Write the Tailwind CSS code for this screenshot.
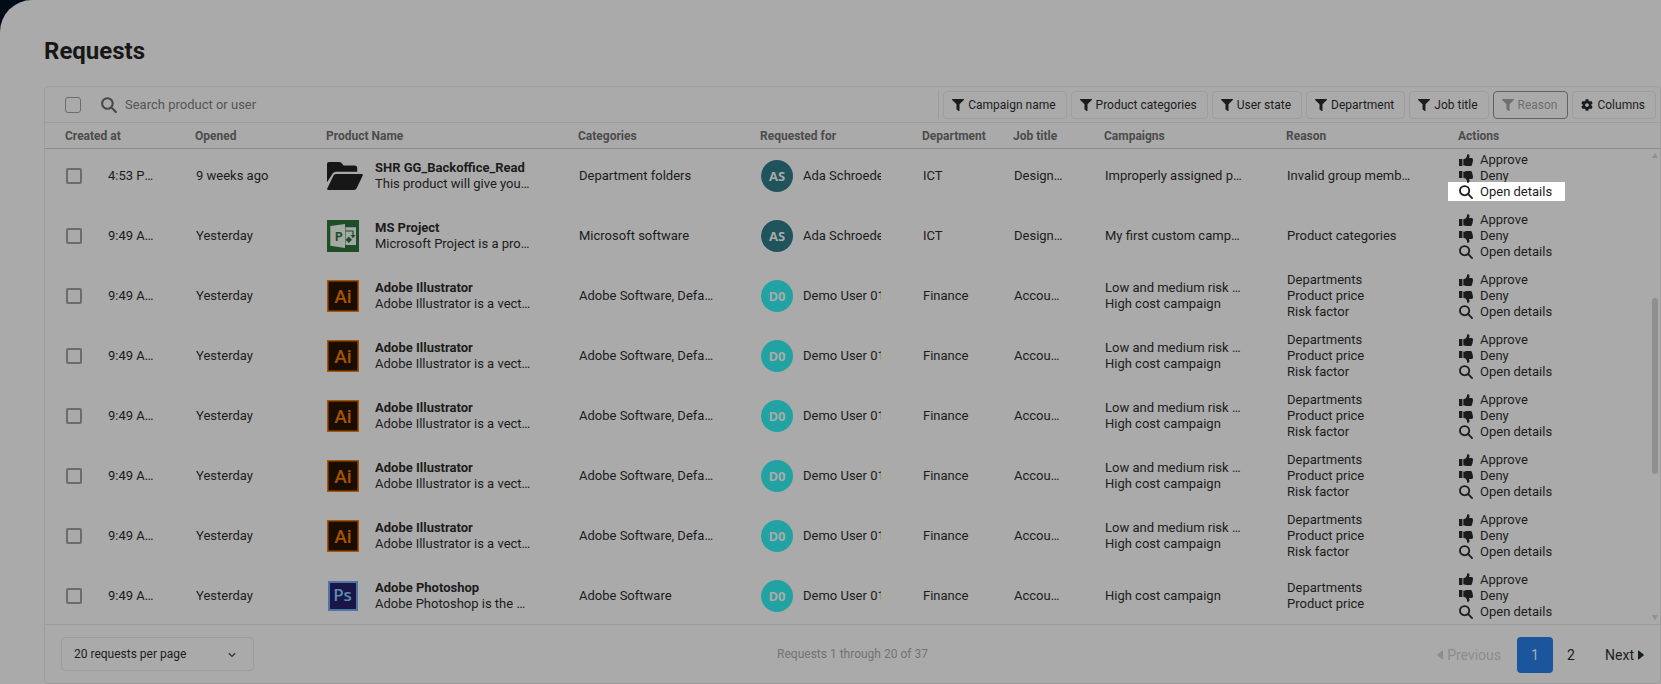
<!DOCTYPE html>
<html lang="en">
<head>
  <meta charset="UTF-8">
  <meta name="viewport" content="width=device-width, initial-scale=1.0">
  <title>Requests</title>
  <script src="https://cdn.jsdelivr.net/npm/@tailwindcss/browser@4"></script>
</head>
<body class="bg-[#000c18] font-['Roboto',sans-serif] text-[13px] leading-4 text-[#1c1c1c]">

  <!-- Icons -->
  <svg class="hidden">
    <symbol id="i-filter" viewBox="0 0 512 512"><path d="M487.976 0H24.028C2.71 0-8.047 25.866 7.058 40.971L192 225.941V432c0 7.831 3.821 15.17 10.237 19.662l80 55.98C298.02 518.69 320 507.493 320 487.98V225.941l184.947-184.97C520.021 25.896 509.338 0 487.976 0z"/></symbol>
    <symbol id="i-cog" viewBox="0 0 512 512"><path d="M487.4 315.7l-42.6-24.6c4.3-23.2 4.3-47 0-70.2l42.6-24.6c4.9-2.8 7.1-8.6 5.5-14-11.1-35.6-30-67.8-54.7-94.6-3.8-4.1-10-5.1-14.8-2.3L380.8 110c-17.9-15.4-38.5-27.3-60.8-35.1V25.8c0-5.6-3.9-10.5-9.4-11.7-36.7-8.2-74.3-7.8-109.2 0-5.5 1.2-9.4 6.1-9.4 11.7V75c-22.2 7.9-42.8 19.8-60.8 35.1L88.7 85.5c-4.9-2.8-11-1.9-14.8 2.3-24.7 26.7-43.6 58.9-54.7 94.6-1.7 5.4.6 11.2 5.5 14L67.3 221c-4.3 23.2-4.3 47 0 70.2l-42.6 24.6c-4.9 2.8-7.1 8.6-5.5 14 11.1 35.6 30 67.8 54.7 94.6 3.8 4.1 10 5.1 14.8 2.3l42.6-24.6c17.9 15.4 38.5 27.3 60.8 35.1v49.2c0 5.6 3.9 10.5 9.4 11.7 36.7 8.2 74.3 7.8 109.2 0 5.5-1.2 9.4-6.1 9.4-11.7v-49.2c22.2-7.9 42.8-19.8 60.8-35.1l42.6 24.6c4.9 2.8 11 1.9 14.8-2.3 24.7-26.7 43.6-58.9 54.7-94.6 1.5-5.5-.7-11.3-5.6-14.1zM256 336c-44.1 0-80-35.9-80-80s35.9-80 80-80 80 35.9 80 80-35.9 80-80 80z"/></symbol>
    <symbol id="i-thumb" viewBox="0 0 14 13"><path d="M0 5h3.4v7H0zM4.3 5.2 6.6 4.4 8 2.2V.7C8.3.1 9 0 9.5.3c1 .5 1.2 1.5.9 2.5L10 4h3c.8.2 1.1 1 .8 1.7.3.5.3 1.1-.1 1.6.2.6.1 1.1-.3 1.5.1.7-.1 1.2-.5 1.6 0 1-.6 1.7-1.6 1.7H8.5c-1.5 0-2.7-.6-4.2-.9z"/></symbol>
    <symbol id="i-search" viewBox="0 0 16 16"><path fill="none" stroke="currentColor" stroke-width="2.1" stroke-linecap="round" d="M11.7 6.5a5.3 5.3 0 1 1-10.6 0 5.3 5.3 0 0 1 10.6 0zM10.5 10.4l4.4 4.5"/></symbol>
    <symbol id="i-folder" viewBox="0 0 36 28"><path d="M0 20.3V2Q0 0 2 0H12.500Q14 0 15 1.500L16.500 3.500H28Q30.200 3.500 30.200 6V9.700H9Q6.800 9.700 5.700 11.500zM8.800 12H35Q36.300 12 35.700 13.400L29.800 26Q28.900 28 27 28H1.200Q-.4 28 .4 26.300L6.500 13.500Q7.200 12 8.800 12z"/></symbol>
  </svg>

  <main class="min-h-screen rounded-tl-[32px] bg-[#aaaaaa] pt-9 pl-11">
    <h1 class="mb-5 text-2xl leading-[30px] font-bold text-[#171717]">Requests</h1>

    <div class="rounded border border-[#9c9c9c]">

      <!-- Toolbar -->
      <div class="flex h-9 items-center border-b border-[#9c9c9c] pr-1 pl-5">
        <input type="checkbox" aria-label="Select all requests" class="size-4 shrink-0 appearance-none rounded-[3px] border border-[#6c6c6c]">
        <svg class="ml-5 size-4 shrink-0 text-[#484848]"><use href="#i-search"/></svg>
        <input type="text" aria-label="Search product or user" placeholder="Search product or user" class="ml-2 min-w-0 grow outline-none placeholder:text-[#555555]">
        <div id="filters" class="flex shrink-0 gap-1 border-l border-[#9c9c9c] pl-1 text-xs"></div>
      </div>

      <!-- Requests table -->
      <div class="relative">
        <table class="w-full table-fixed border-b border-[#9c9c9c] text-left">
          <colgroup>
            <col class="w-[140px]"><col class="w-[131px]"><col class="w-[252px]"><col class="w-[182px]"><col class="w-[162px]">
            <col class="w-[91px]"><col class="w-[91px]"><col class="w-[182px]"><col class="w-[172px]"><col class="w-[212px]">
          </colgroup>
          <thead>
            <tr class="h-[25px] border-b border-[#8c8c8c] text-xs text-[#4c4c4c] [&>th]:pt-0.5">
              <th class="pl-5 font-bold">Created at</th>
              <th class="pl-2.5 font-bold">Opened</th>
              <th class="pl-2.5 font-bold">Product Name</th>
              <th class="pl-2.5 font-bold">Categories</th>
              <th class="pl-2.5 font-bold">Requested for</th>
              <th class="pl-2.5 font-bold">Department</th>
              <th class="pl-2.5 font-bold">Job title</th>
              <th class="pl-2.5 font-bold">Campaigns</th>
              <th class="pl-2.5 font-bold">Reason</th>
              <th class="pl-2.5 font-bold">Actions</th>
            </tr>
          </thead>
          <tbody id="requests"></tbody>
        </table>

        <!-- Scrollbar -->
        <div class="absolute top-[30px] right-0.5 bottom-1 flex w-1.5 flex-col items-center text-[#8f8f8f]">
          <svg class="h-1.5 w-1.5" viewBox="0 0 6 6" fill="currentColor"><path d="M3 0l3 5H0z"/></svg>
          <div class="mt-[139px] h-44 w-1.5 rounded-full bg-[#8f8f8f]"></div>
          <svg class="mt-auto h-1.5 w-1.5" viewBox="0 0 6 6" fill="currentColor"><path d="M0 0h6L3 5z"/></svg>
        </div>
      </div>

      <!-- Footer -->
      <div class="grid h-[58px] grid-cols-3 items-center pr-2 pl-4 text-xs">
        <div class="relative w-[193px]">
          <select aria-label="Requests per page" class="h-[34px] w-full appearance-none rounded border border-[#9c9c9c] pl-3">
            <option>20 requests per page</option>
          </select>
          <svg class="pointer-events-none absolute top-3.5 right-[18px] size-2" viewBox="0 0 8 8" fill="none" stroke="#333333" stroke-width="1.3"><path d="M.8 2.2 4 5.4l3.2-3.2"/></svg>
        </div>
        <p class="pr-2 text-center text-[#737373]">Requests 1 through 20 of 37</p>
        <nav class="flex items-center justify-end pt-0.5 text-sm" aria-label="Pagination">
          <button disabled class="mr-4 flex items-center gap-1 text-[#8c8c8c]">
            <svg class="h-2.5 w-1.5" viewBox="0 0 6 10" fill="currentColor"><path d="M6 1v8Q6 10 5 9.300L.4 5.500Q0 5 .4 4.500L5 .7Q6 0 6 1z"/></svg>
            Previous
          </button>
          <button class="size-9 rounded bg-[#1b559e] text-[#aaaaaa]" aria-current="page">1</button>
          <button class="w-9">2</button>
          <button class="ml-4 flex items-center gap-1 pr-2">
            Next
            <svg class="h-2.5 w-1.5" viewBox="0 0 6 10" fill="currentColor"><path d="M0 1v8Q0 10 1 9.300L5.600 5.500Q6 5 5.600 4.500L1 .7Q0 0 0 1z"/></svg>
          </button>
        </nav>
      </div>
    </div>
  </main>

  <script>
    const filters = ['Campaign name', 'Product categories', 'User state', 'Department', 'Job title', 'Reason', 'Columns'];

    const logos = {
      folder: '<svg class="h-7 w-9" fill="#171717"><use href="#i-folder"/></svg>',
      project: `
        <svg class="size-8" viewBox="0 0 32 32">
          <path fill="#1f4d27" d="M0 0h32v32H0z"/>
          <path fill="#a3a9a3" d="M3.300 6 18 4v24L3.300 25.700zM18.500 7.300H29v17.700H18.500z"/>
          <path fill="none" stroke="#1f4d27" stroke-width="1.2" d="M18.500 11h7.500v5"/>
          <path fill="#1f4d27" d="M23.500 15h5L26 18.300zM21.800 16.500l3.200 3.200-3.200 3.300-3.200-3.300z"/>
          <text x="8" y="20.700" font-family="Roboto, sans-serif" font-weight="700" font-size="12" fill="#1f4d27">P</text>
        </svg>`,
      illustrator: `
        <svg class="size-8" viewBox="0 0 32 32">
          <path fill="#1a0d00" stroke="#a65300" stroke-width="1.5" d="M.75.75h30.500v30.500H.75z"/>
          <text x="16" y="22.500" text-anchor="middle" font-family="Roboto, sans-serif" font-weight="500" font-size="19" fill="#a65300">Ai</text>
        </svg>`,
      photoshop: `
        <svg class="size-8" viewBox="0 0 32 32">
          <path fill="#1a1648" stroke="#4a76a8" stroke-width="2" d="M2 2h28v28H2z"/>
          <text x="15.500" y="21" text-anchor="middle" font-family="Open Sans, sans-serif" font-weight="600" font-size="17" fill="#5d8cb3">Ps</text>
        </svg>`
    };

    const ada = { name: 'Ada Schroeder', initials: 'AS', color: '#20545d', department: 'ICT', job: 'Designer' };
    const demo = { name: 'Demo User 01', initials: 'D0', color: '#22a3a3', department: 'Finance', job: 'Accountant' };

    const illustrator = {
      created: '9:49 AM, today', opened: 'Yesterday', logo: 'illustrator',
      title: 'Adobe Illustrator', text: 'Adobe Illustrator is a vector graphics editor',
      categories: 'Adobe Software, Default software', user: demo,
      campaigns: ['Low and medium risk software', 'High cost campaign'],
      reasons: ['Departments', 'Product price', 'Risk factor']
    };

    const requests = [
      {
        created: '4:53 PM, today', opened: '9 weeks ago', logo: 'folder',
        title: 'SHR GG_Backoffice_Read', text: 'This product will give you access to the folder',
        categories: 'Department folders', user: ada,
        campaigns: ['Improperly assigned products'], reasons: ['Invalid group membership'], highlight: true
      },
      {
        created: '9:49 AM, today', opened: 'Yesterday', logo: 'project',
        title: 'MS Project', text: 'Microsoft Project is a project management tool',
        categories: 'Microsoft software', user: ada,
        campaigns: ['My first custom campaign'], reasons: ['Product categories']
      },
      illustrator, illustrator, illustrator, illustrator, illustrator,
      {
        created: '9:49 AM, today', opened: 'Yesterday', logo: 'photoshop',
        title: 'Adobe Photoshop', text: 'Adobe Photoshop is the predominant editor',
        categories: 'Adobe Software', user: demo,
        campaigns: ['High cost campaign'], reasons: ['Departments', 'Product price']
      }
    ];

    // Filter buttons
    document.getElementById('filters').innerHTML = filters.map(name => {
      const state = name === 'Reason' ? 'border-[#626262] text-[#6f6f6f]' : 'border-[#9e9e9e]';
      const icon = name === 'Columns' ? 'i-cog' : 'i-filter';
      return `
        <button class="flex h-7 items-center gap-1 rounded border pr-2.5 pl-2 whitespace-nowrap ${state}">
          <svg class="size-3" fill="currentColor"><use href="#${icon}"/></svg>${name}
        </button>`;
    }).join('');

    function rowSize(i) {
      if (i === 0) return 'h-[58px] [&>td]:pb-0.5';
      if (i === requests.length - 1) return 'h-[58px] [&>td]:pt-0.5';
      return 'h-[60px]';
    }

    const lines = items => items.map(item => `<p class="truncate">${item}</p>`).join('');

    document.getElementById('requests').innerHTML = requests.map((r, i) => `
      <tr class="${rowSize(i)}">
        <td class="pr-[30px] pl-[21px]">
          <label class="flex items-center gap-[26px]">
            <input type="checkbox" class="size-4 shrink-0 appearance-none rounded-xs border-2 border-[#6c6c6c]">
            <span class="truncate">${r.created}</span>
          </label>
        </td>
        <td class="pl-[11px]">${r.opened}</td>
        <td class="pr-[37px] pl-[11px]">
          <div class="flex items-center gap-3">
            <div class="w-9 shrink-0">${logos[r.logo]}</div>
            <div class="min-w-0">
              <p class="truncate font-bold">${r.title}</p>
              <p class="truncate">${r.text}</p>
            </div>
          </div>
        </td>
        <td class="pr-[30px] pl-[11px]"><p class="truncate">${r.categories}</p></td>
        <td class="pr-[30px] pl-[11px]">
          <div class="flex items-center gap-2.5 pr-px">
            <span class="flex size-8 shrink-0 items-center justify-center rounded-full font-['Open_Sans',sans-serif] font-bold text-[#aaaaaa]" style="background:${r.user.color}">${r.user.initials}</span>
            <span class="overflow-hidden whitespace-nowrap">${r.user.name}</span>
          </div>
        </td>
        <td class="pl-[11px]">${r.user.department}</td>
        <td class="pr-[30px] pl-[11px]"><p class="truncate">${r.user.job}</p></td>
        <td class="pr-8 pl-[11px]">${lines(r.campaigns)}</td>
        <td class="pr-8 pl-[11px]">${lines(r.reasons)}</td>
        <td class="pl-[11px]">
          <div class="flex flex-col items-start">
            <button class="flex items-center gap-[7px]"><svg class="h-[13px] w-3.5" fill="currentColor"><use href="#i-thumb"/></svg>Approve</button>
            <button class="flex items-center gap-[7px]"><svg class="h-[13px] w-3.5 -scale-y-100" fill="currentColor"><use href="#i-thumb"/></svg>Deny</button>
            <button class="flex items-center gap-[7px] ${r.highlight ? '-mt-0.5 -mb-px -ml-[11px] bg-white pt-0.5 pr-[13px] pb-px pl-[11px]' : ''}"><svg class="h-3.5 w-3.5"><use href="#i-search"/></svg>Open details</button>
          </div>
        </td>
      </tr>`).join('');
  </script>
</body>
</html>
